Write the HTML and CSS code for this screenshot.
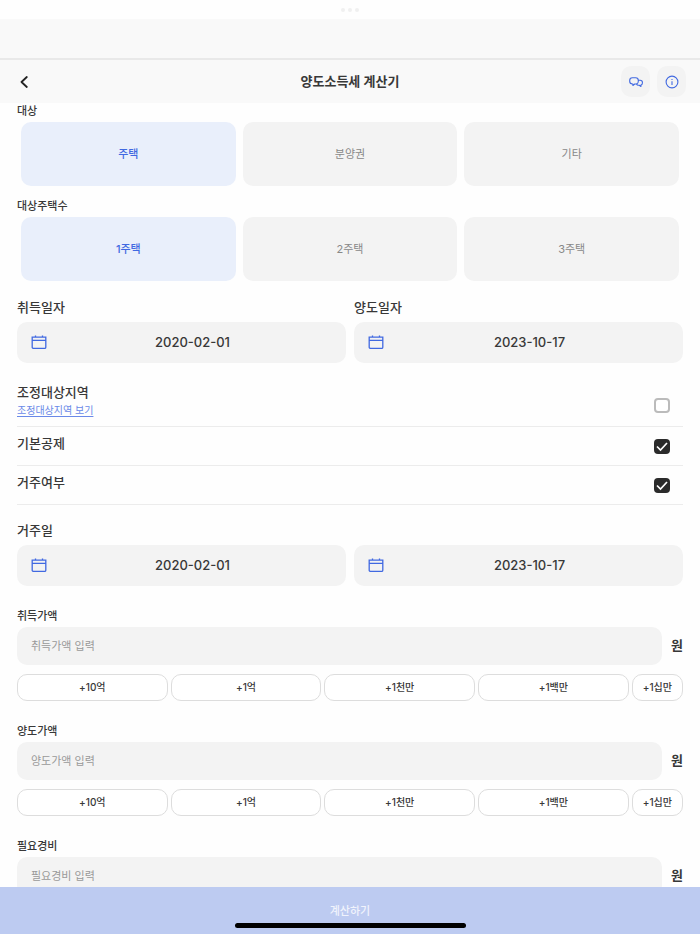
FILE: index.html
```html
<!DOCTYPE html>
<html lang="ko">
<head>
    <meta charset="UTF-8">
    <meta name="viewport" content="width=device-width, initial-scale=1.0">
    <title>양도소득세 계산기</title>
    <link rel="stylesheet" href="styles.css">
</head>
<body>

    <div class="window-bar">
        <span class="dot"></span>
        <span class="dot"></span>
        <span class="dot"></span>
    </div>
    <div class="top-band"></div>

    <header class="header">
        <div class="header-side">
            <button class="back" type="button" aria-label="뒤로">
                <svg width="8" height="12" viewBox="0 0 8 12" fill="none" stroke="#222" stroke-width="1.800" stroke-linecap="round" stroke-linejoin="round"><path d="M6.800 1 1.500 6l5.300 5"/></svg>
            </button>
        </div>
        <h1>양도소득세 계산기</h1>
        <div class="header-side header-actions">
            <button class="icon-button" type="button" aria-label="상담">
                <svg width="14" height="12" viewBox="0 0 14 12" fill="none" stroke="#4169e1" stroke-width="1.1" stroke-linejoin="round" stroke-linecap="round"><path d="M7.800 8H5.700L3.900 9.500V8H3.400C1.700 8 .7 7 .7 5.300V4.400C.7 2.700 1.700 1.700 3.400 1.700H6.600C8.300 1.700 9.300 2.700 9.300 4.400V5.300C9.300 7 8.900 7.600 7.800 8Z"/><path d="M9.500 4.200H11.200C12.600 4.200 13.400 5 13.400 6.300V7C13.400 8.300 12.800 9 11.900 9.100V10.500L10.300 9.200H9.300C8.400 9.200 7.900 8.800 7.700 8.100"/></svg>
            </button>
            <button class="icon-button" type="button" aria-label="정보">
                <svg width="14" height="14" viewBox="0 0 14 14" fill="none" stroke="#4169e1" stroke-width="1.1"><circle cx="7" cy="7" r="5.900"/><path d="M7 6.200v3.900"/><path d="M7 3.900v1.200"/></svg>
            </button>
        </div>
    </header>

    <main class="content">
        <section class="group">
            <h2 class="label">대상</h2>
            <div class="options">
                <button class="option selected" type="button">주택</button>
                <button class="option" type="button">분양권</button>
                <button class="option" type="button">기타</button>
            </div>
        </section>

        <section class="group">
            <h2 class="label">대상주택수</h2>
            <div class="options">
                <button class="option selected" type="button">1주택</button>
                <button class="option" type="button">2주택</button>
                <button class="option" type="button">3주택</button>
            </div>
        </section>

        <section class="dates">
            <div class="date-field">
                <label class="title" for="buyDate">취득일자</label>
                <div class="date-box">
                    <svg class="calendar" viewBox="0 0 16 14"><path d="M1.200 2.200h13.600v10a1.200 1.200 0 0 1-1.200 1.200H2.400a1.200 1.200 0 0 1-1.200-1.200zM1.200 5.400h13.600M4.500 .4v1.800M11.500 .4v1.800"/></svg>
                    <input type="text" id="buyDate" value="2020-02-01" readonly>
                </div>
            </div>
            <div class="date-field">
                <label class="title" for="sellDate">양도일자</label>
                <div class="date-box">
                    <svg class="calendar" viewBox="0 0 16 14"><path d="M1.200 2.200h13.600v10a1.200 1.200 0 0 1-1.200 1.200H2.400a1.200 1.200 0 0 1-1.200-1.200zM1.200 5.400h13.600M4.500 .4v1.800M11.500 .4v1.800"/></svg>
                    <input type="text" id="sellDate" value="2023-10-17" readonly>
                </div>
            </div>
        </section>

        <section class="checks">
            <div class="check-row tall">
                <div class="check-text">
                    <label class="title" for="area">조정대상지역</label>
                    <a href="#">조정대상지역 보기</a>
                </div>
                <input type="checkbox" id="area">
            </div>
            <div class="check-row">
                <label class="title" for="deduction">기본공제</label>
                <input type="checkbox" id="deduction" checked>
            </div>
            <div class="check-row">
                <label class="title" for="residence">거주여부</label>
                <input type="checkbox" id="residence" checked>
            </div>
        </section>

        <section class="stay">
            <h2 class="title">거주일</h2>
            <div class="date-pair">
                <div class="date-box">
                    <svg class="calendar" viewBox="0 0 16 14"><path d="M1.200 2.200h13.600v10a1.200 1.200 0 0 1-1.200 1.200H2.400a1.200 1.200 0 0 1-1.200-1.200zM1.200 5.400h13.600M4.500 .4v1.800M11.500 .4v1.800"/></svg>
                    <input type="text" value="2020-02-01" aria-label="거주 시작일" readonly>
                </div>
                <div class="date-box">
                    <svg class="calendar" viewBox="0 0 16 14"><path d="M1.200 2.200h13.600v10a1.200 1.200 0 0 1-1.200 1.200H2.400a1.200 1.200 0 0 1-1.200-1.200zM1.200 5.400h13.600M4.500 .4v1.800M11.500 .4v1.800"/></svg>
                    <input type="text" value="2023-10-17" aria-label="거주 종료일" readonly>
                </div>
            </div>
        </section>

        <section class="amount">
            <label class="label" for="buyPrice">취득가액</label>
            <div class="amount-row">
                <input type="text" id="buyPrice" placeholder="취득가액 입력">
                <span class="unit">원</span>
            </div>
            <div class="chips">
                <button type="button">+10억</button>
                <button type="button">+1억</button>
                <button type="button">+1천만</button>
                <button type="button">+1백만</button>
                <button class="small" type="button">+1십만</button>
            </div>
        </section>

        <section class="amount">
            <label class="label" for="sellPrice">양도가액</label>
            <div class="amount-row">
                <input type="text" id="sellPrice" placeholder="양도가액 입력">
                <span class="unit">원</span>
            </div>
            <div class="chips">
                <button type="button">+10억</button>
                <button type="button">+1억</button>
                <button type="button">+1천만</button>
                <button type="button">+1백만</button>
                <button class="small" type="button">+1십만</button>
            </div>
        </section>

        <section class="amount">
            <label class="label" for="expense">필요경비</label>
            <div class="amount-row">
                <input type="text" id="expense" placeholder="필요경비 입력">
                <span class="unit">원</span>
            </div>
        </section>
    </main>

    <footer class="footer">
        <button class="submit" type="button">계산하기</button>
        <div class="home-bar"></div>
    </footer>

</body>
</html>
```

FILE: styles.css
```css
* {
    box-sizing: border-box;
}
body {
    margin: 0;
    height: 100vh;
    display: flex;
    flex-direction: column;
    overflow: hidden;
    background-color: #fefefe;
    color: #383838;
    font-family: Inter, "Noto Sans CJK KR", sans-serif;
    font-size: 11px;
    font-weight: 500;
}
button, input {
    font: inherit;
    color: inherit;
    border: none;
    margin: 0;
    padding: 0;
    min-width: 0;
}
button {
    cursor: pointer;
}
h1, h2 {
    margin: 0;
}

/* top of the window */
.window-bar {
    flex: none;
    height: 19px;
    display: flex;
    align-items: center;
    justify-content: center;
    gap: 3px;
}
.dot {
    width: 4px;
    height: 4px;
    border-radius: 50%;
    background-color: #f0f0f0;
}
.top-band {
    flex: none;
    height: 41px;
    background-color: #f9f9f9;
    border-bottom: 2px solid #e9e9e9;
}
.header {
    flex: none;
    height: 43px;
    padding: 0 14px;
    display: flex;
    align-items: center;
    background-color: #f9f9f9;
}
.header h1 {
    padding-bottom: 2px;
    font-size: 13px;
    line-height: 18px;
    font-weight: 600;
}
.header-side {
    flex: 1;
    display: flex;
}
.header-actions {
    justify-content: flex-end;
    gap: 7px;
}
.back {
    width: 20px;
    height: 28px;
    display: flex;
    align-items: center;
    justify-content: center;
    background: none;
}
.icon-button {
    width: 29px;
    height: 31px;
    border-radius: 10px;
    display: flex;
    align-items: center;
    justify-content: center;
    background-color: #f3f3f3;
}

/* form */
.content {
    flex: 1;
    min-height: 0;
    padding: 0 17px;
    overflow-y: auto;
    scrollbar-width: none;
}
.label {
    display: block;
    margin-bottom: 3px;
    font-size: 11px;
    line-height: 16px;
    font-weight: 500;
}
.title {
    display: block;
    font-size: 13px;
    line-height: 18px;
    font-weight: 500;
}
.group {
    margin-bottom: 12px;
}
.options {
    display: flex;
    gap: 7px;
    padding: 0 4px;
}
.option {
    flex: 1;
    height: 64px;
    padding-bottom: 2px;
    border-radius: 10px;
    background-color: #f3f3f3;
    color: #888;
    font-weight: 400;
}
.option.selected {
    background-color: #e9effb;
    color: #4169e1;
    font-weight: 500;
}
.dates, .date-pair {
    display: flex;
    gap: 8px;
}
.dates {
    margin-top: 17px;
}
.date-field {
    flex: 1;
}
.date-field .title, .stay .title {
    margin-bottom: 6px;
}
.date-box {
    flex: 1;
    height: 41px;
    padding: 0 14px 2px;
    display: flex;
    align-items: center;
    gap: 6px;
    border-radius: 10px;
    background-color: #f3f3f3;
}
.date-box input {
    flex: 1;
    background: none;
    text-align: center;
    font-size: 13px;
}
.calendar {
    flex: none;
    width: 16px;
    height: 14px;
    fill: none;
    stroke: #4169e1;
    stroke-width: 1.3;
}
.check-row {
    height: 39px;
    padding-right: 13px;
    display: flex;
    align-items: center;
    justify-content: space-between;
    border-bottom: 1px solid #ececec;
}
.check-row .title {
    padding-bottom: 6px;
}
.check-row.tall {
    height: 64px;
    padding-top: 21px;
}
.check-row.tall .title {
    padding-bottom: 0;
}
.check-text {
    padding-bottom: 9px;
}
.check-text a {
    display: block;
    color: #6a89e8;
    font-size: 10px;
    line-height: 18px;
    font-weight: 400;
    text-underline-offset: 2px;
}
.check-row input {
    appearance: none;
    width: 16px;
    height: 15px;
    border: 2px solid #bbb;
    border-radius: 4px;
    background-color: #fff;
}
.check-row input:checked {
    border: none;
    background: #2b2b2b url("data:image/svg+xml,%3Csvg xmlns='http://www.w3.org/2000/svg' viewBox='0 0 16 15' fill='none' stroke='white' stroke-width='1.7'%3E%3Cpath d='M3 7.500 6.500 11 13 4'/%3E%3C/svg%3E") center no-repeat;
}
.stay {
    margin-top: 16px;
}
.amount {
    margin-top: 22px;
}
.amount-row {
    display: flex;
    align-items: center;
    gap: 9px;
}
.amount-row input {
    flex: 1;
    height: 38px;
    padding: 0 14px;
    border-radius: 10px;
    background-color: #f3f3f3;
    font-weight: 400;
}
.amount-row input::placeholder {
    color: #999;
    opacity: 1;
}
.unit {
    padding-bottom: 3px;
    font-size: 13px;
    line-height: 18px;
    font-weight: 600;
}
.chips {
    display: flex;
    gap: 3px;
    margin-top: 9px;
}
.chips button {
    flex: 1;
    height: 27px;
    padding-bottom: 2px;
    border: 1px solid #ddd;
    border-radius: 10px;
    background-color: #fff;
    font-size: 10px;
}
.chips .small {
    flex: none;
    padding: 0 10px 2px;
}

/* bottom bar */
.footer {
    flex: none;
    background-color: #bdcbf1;
    display: flex;
    flex-direction: column;
    align-items: center;
    padding-bottom: 6px;
}
.submit {
    width: 100%;
    height: 36px;
    padding-top: 9px;
    background: none;
    color: #f0f3fc;
}
.home-bar {
    width: 33%;
    height: 5px;
    border-radius: 3px;
    background-color: #000;
}
```
